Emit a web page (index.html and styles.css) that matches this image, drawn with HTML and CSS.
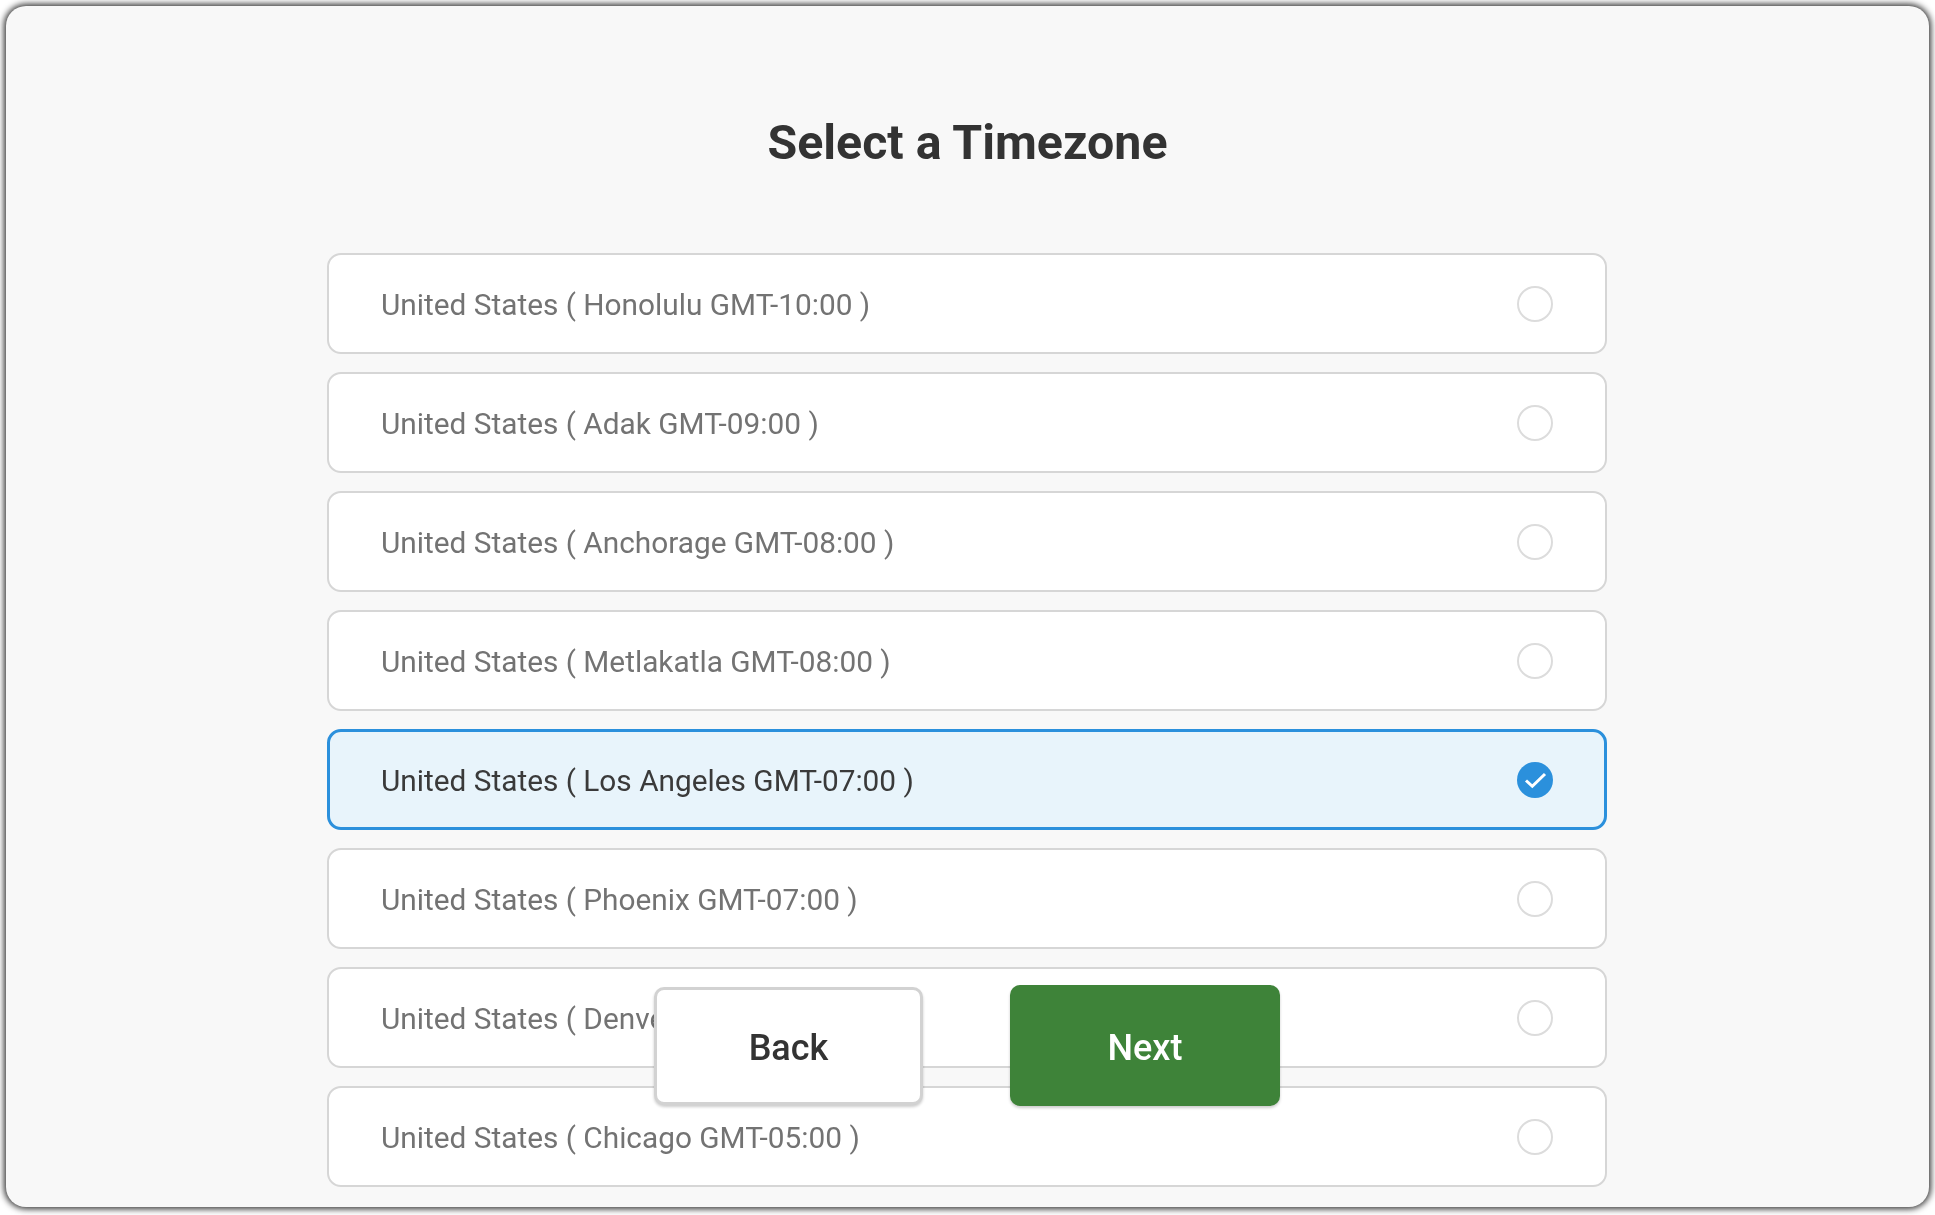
FILE: index.html
```html
<!DOCTYPE html>
<html lang="en">
<head>
<meta charset="utf-8">
<title>Select a Timezone</title>
<link rel="stylesheet" href="styles.css">
</head>
<body>
<main class="frame">
  <h1 class="title">Select a Timezone</h1>
  <ul class="list">
    <li class="row"><span>United States ( Honolulu GMT-10:00 )</span><i class="radio"></i></li>
    <li class="row"><span>United States ( Adak GMT-09:00 )</span><i class="radio"></i></li>
    <li class="row"><span>United States ( Anchorage GMT-08:00 )</span><i class="radio"></i></li>
    <li class="row"><span>United States ( Metlakatla GMT-08:00 )</span><i class="radio"></i></li>
    <li class="row selected"><span>United States ( Los Angeles GMT-07:00 )</span>
      <svg class="check" viewBox="0 0 36 36" aria-hidden="true"><circle cx="18" cy="18" r="18" fill="#2b90dc"/><path d="M9 18.5l6.3 5.8L28 12" fill="none" stroke="#fff" stroke-width="3"/></svg>
    </li>
    <li class="row"><span>United States ( Phoenix GMT-07:00 )</span><i class="radio"></i></li>
    <li class="row"><span>United States ( Denver GMT-06:00 )</span><i class="radio"></i></li>
    <li class="row"><span>United States ( Chicago GMT-05:00 )</span><i class="radio"></i></li>
  </ul>
  <div class="actions">
    <button class="btn back">Back</button>
    <button class="btn next">Next</button>
  </div>
</main>
</body>
</html>
```
FILE: styles.css
```css
* { box-sizing: border-box; }
html, body { margin: 0; height: 100%; background: #fff; overflow: hidden; }
body {
  padding: 6px 6px 8px 6px;
  font-family: Roboto, "Liberation Sans", sans-serif;
  filter: blur(0.5px);
}
.frame {
  position: relative;
  height: 1201px;
  background: #f8f8f8;
  border-radius: 20px;
  box-shadow: 0 0 6px 2px rgba(0,0,0,.8);
  overflow: hidden;
  padding-top: 108px;
}
.title {
  margin: 0;
  height: 58px;
  line-height: 58px;
  text-align: center;
  font-size: 48.3px;
  font-weight: 700;
  color: #333;
}
.list {
  list-style: none;
  margin: 81px 0 0 321px;
  padding: 0;
  width: 1280px;
  display: flex;
  flex-direction: column;
  gap: 18px;
}
.row {
  height: 101px;
  display: flex;
  align-items: center;
  justify-content: space-between;
  padding: 2px 52px 0;
  background: #fff;
  border: 2px solid #d6d6d6;
  border-radius: 14px;
  font-size: 29.8px;
  color: #737373;
}
.row.selected {
  background: #e8f4fb;
  border: 3px solid #2b90dc;
  color: #3a3a3a;
  padding: 1px 51px 0;
}
.radio {
  width: 36px;
  height: 36px;
  margin-top: -2px;
  border: 2px solid #dcdcdc;
  border-radius: 50%;
}
.check { width: 36px; height: 36px; margin-top: -1px; }
.actions {
  position: absolute;
  left: 648px;
  top: 979px;
  display: flex;
  align-items: center;
  gap: 87px;
}
.btn {
  font-family: inherit;
  font-size: 36px;
  font-weight: 500;
  border-radius: 10px;
  padding: 4px 0 0;
}
.back {
  width: 269px;
  height: 118px;
  background: #fff;
  color: #333;
  border: 3px solid #d2d2d2;
  box-shadow: 0 2px 3px rgba(0,0,0,.2);
}
.next {
  width: 270px;
  height: 121px;
  background: #3e8339;
  color: #fff;
  border: 0;
  box-shadow: 0 2px 3px rgba(0,0,0,.2);
}
```
